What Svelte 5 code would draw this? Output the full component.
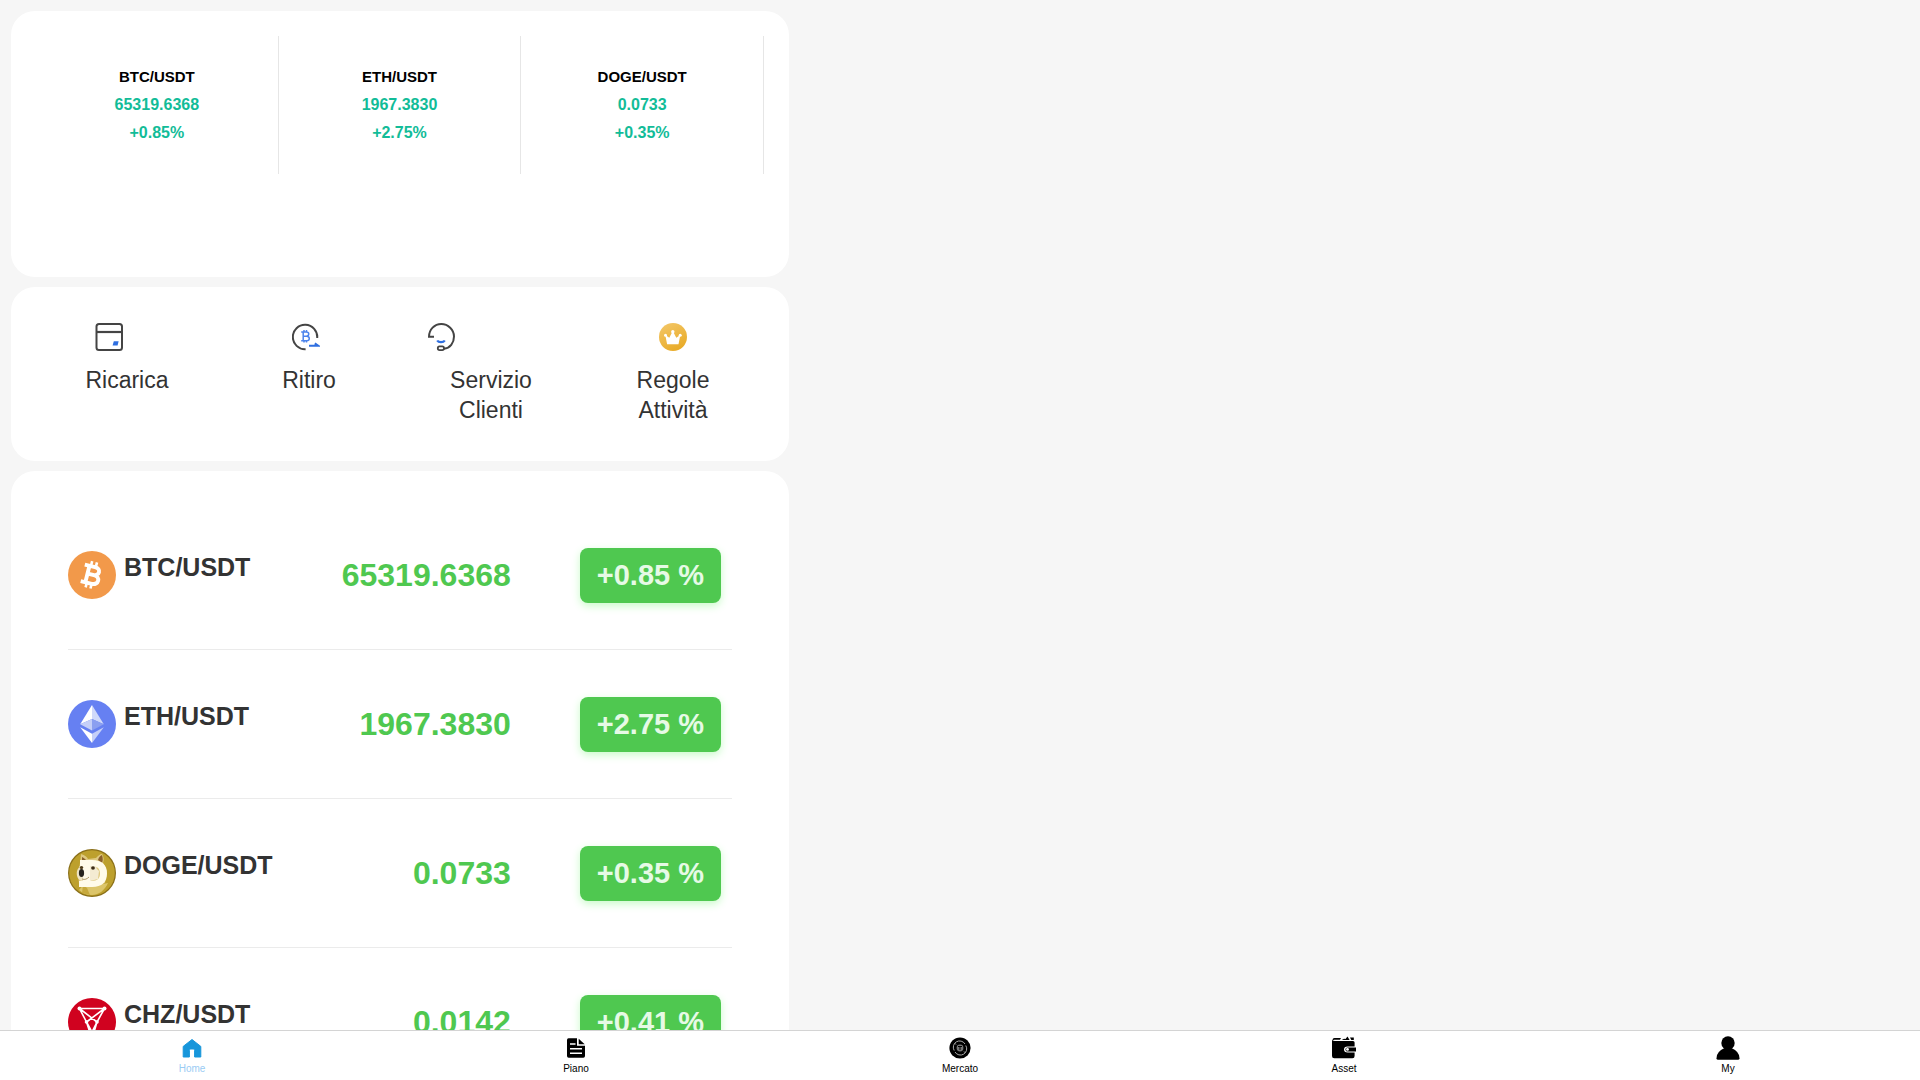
<script>
  const quotes = [
    { pair: 'BTC/USDT', price: '65319.6368', change: '+0.85', coin: 'btc' },
    { pair: 'ETH/USDT', price: '1967.3830', change: '+2.75', coin: 'eth' },
    { pair: 'DOGE/USDT', price: '0.0733', change: '+0.35', coin: 'doge' },
    { pair: 'CHZ/USDT', price: '0.0142', change: '+0.41', coin: 'chz' }
  ];
  const featured = quotes.slice(0, 3);
  const services = [
    { label: 'Ricarica', icon: 'card' },
    { label: 'Ritiro', icon: 'withdraw' },
    { label: 'Servizio Clienti', icon: 'support' },
    { label: 'Regole Attività', icon: 'crown' }
  ];
  const tabs = ['Home', 'Piano', 'Mercato', 'Asset', 'My'];
  let active = $state('Home');
</script>

<div class="app">
  <main>
    <section class="card ticker" aria-label="In evidenza">
      {#each featured as q}
        <a class="tick" href="#{q.coin}">
          <strong>{q.pair}</strong>
          <span>{q.price}</span>
          <span>{q.change}%</span>
        </a>
      {/each}
    </section>

    <section class="card services" aria-label="Servizi">
      {#each services as s}
        <button class="service" class:centered={s.icon === 'crown'}>
          <span class="inner">
            <svg class="sicon" viewBox="0 0 28 28" fill="none" aria-hidden="true">
              {#if s.icon === 'card'}
                <rect x="1.500" y="1" width="25.500" height="26" rx="2.500" stroke="#444" stroke-width="2" />
                <path d="M1.500 9h25.500" stroke="#444" stroke-width="2.200" />
                <path d="M18.800 18.200h4.800l-1 4.400h-5z" fill="#2f6fe0" />
              {:else if s.icon === 'withdraw'}
                <path d="M13.600 26.200A12.200 12.200 0 1 1 25.200 15" stroke="#444" stroke-width="2" />
                <path d="M9.200 9h5c3.400 0 3.400 4.200 0 4.200h-3.200h3.600c3.600 0 3.600 4.600 0 4.600H9.200M11.200 9v8.800M12 7v2M14.500 7v2M12 17.800v1.800M14.500 17.800v1.800" stroke="#4b83ec" stroke-width="1.500" />
                <path d="M17 22.800h9.400L22.800 20.400" stroke="#2f6fe0" stroke-width="2" />
              {:else if s.icon === 'support'}
                <path d="M6 13.800H1C1 6.500 6.500 1 13.300 1S26 6.700 26 13.500c0 6.500-4 11.800-10 12.300" stroke="#444" stroke-width="2" />
                <rect x="9.800" y="23.400" width="6.200" height="3.700" rx="1.800" stroke="#444" stroke-width="1.800" />
                <path d="M9.200 17.500c1.300 2.200 6.300 2.200 7.600 0" stroke="#2f6fe0" stroke-width="2.200" />
              {:else}
                <defs>
                  <linearGradient id="gold" x1="6" y1="2" x2="20" y2="28" gradientUnits="userSpaceOnUse">
                    <stop stop-color="#f2c462" />
                    <stop offset="1" stop-color="#e8aa25" />
                  </linearGradient>
                </defs>
                <circle cx="14" cy="14" r="14" fill="url(#gold)" />
                <g fill="#fff">
                  <path d="M6.300 12l4 2.700L13 9.500h1.600l2.700 5.200L21.300 12l-1.800 9.200H8.100z" />
                  <circle cx="6.500" cy="12.300" r="1.500" />
                  <circle cx="13.800" cy="8.700" r="1.700" />
                  <circle cx="21.200" cy="12.300" r="1.500" />
                </g>
              {/if}
            </svg>
            <span class="label">{s.label}</span>
          </span>
        </button>
      {/each}
    </section>

    <section class="card market" aria-label="Mercato">
      <ul>
        {#each quotes as q}
          <li>
            <svg class="coin" viewBox="0 0 48 48" aria-hidden="true">
              {#if q.coin === 'btc'}
                <circle cx="24" cy="24" r="24" fill="#f2994a" />
                <g transform="rotate(14 24 24)" fill="none" stroke="#fff">
                  <path d="M14.500 15.600h10.500c6.800 0 6.800 8 0 8H19.500h6.300c7.400 0 7.400 9 0 9H14.500M19.300 15.600v17" stroke-width="3.900" />
                  <path d="M20.800 10.500v5M25.800 10.500v5M20.800 32.500v5M25.800 32.500v5" stroke-width="2.600" />
                </g>
              {:else if q.coin === 'eth'}
                <circle cx="24" cy="24" r="24" fill="#6680f2" />
                <path d="M24 5L12.200 24.300 24 19z" fill="#fff" />
                <path d="M24 5l11.800 19.300L24 19z" fill="#d0d9fa" />
                <path d="M24 19l-11.800 5.300L24 30.500z" fill="#c5cff8" />
                <path d="M24 19l11.800 5.300L24 30.500z" fill="#8b9ff0" />
                <path d="M12.200 27.200L24 33.700V43z" fill="#fff" />
                <path d="M35.800 27.200L24 33.700V43z" fill="#c5cff8" />
              {:else if q.coin === 'doge'}
                <circle cx="24" cy="24" r="24" fill="#8a6f18" />
                <circle cx="24" cy="24" r="22.800" fill="#bda02d" />
                <path d="M11 41L18 33l17 2 5-1c-3 7-9 12-16 12-5 0-10-2-13-5z" fill="#dcc56a" />
                <path d="M15 36l-1 8 8 2-3-7z" fill="#c6a83c" />
                <path d="M12 14l1-9c4 1 6 3 7 5l8-1c2-2 4-4 6-4 2 3 2 6 1 9l4 8-2 12-13 4-13-4-1-8z" fill="#dfc980" />
                <path d="M14 8c2 1 3 2 4 3l-4 2zM34 6c1 3 1 6 0 8l-4-3c1-3 2-4 4-5z" fill="#8b602b" />
                <path d="M9 22c2-5 5-8 11-9l9 3-3 15-12 1c-4-1-6-5-5-10z" fill="#eee4c4" />
                <path fill-rule="evenodd" d="M12 11h12c10 0 15 5 15 13.500S34 38 24 38H11v-6h4V17h-3zm11 6v15c7 0 9-3 9-7.500S30 17 23 17z" fill="#fffbea" />
                <path d="M22 17h4l5 5-1 8-8 2z" fill="#f4ebd2" />
                <ellipse cx="13.500" cy="24" rx="2.600" ry="4" fill="#28251f" />
                <ellipse cx="13.500" cy="18.500" rx="1.700" ry="1.500" fill="#4e3c1d" />
                <ellipse cx="25" cy="19" rx="1.900" ry="1.700" fill="#3b2b17" />
                <path d="M14 30c3 1 5 0 7-2" stroke="#b09a68" fill="none" />
              {:else}
                <circle cx="24" cy="24" r="24" fill="#d0021f" />
                <g fill="none" stroke="#fff" stroke-width="1.600">
                  <path d="M11.500 10.500h25L29 24 24 41 18.500 24zM11.500 10.500L29 24M36.500 10.500L18.500 24M18.500 24L24 34l5-10" />
                </g>
                <g fill="#fff">
                  <circle cx="11.500" cy="10.500" r="2" />
                  <circle cx="36.500" cy="10.500" r="2" />
                  <circle cx="18.500" cy="24" r="1.800" />
                  <circle cx="29" cy="24" r="1.800" />
                </g>
              {/if}
            </svg>
            <span class="pair">{q.pair}</span>
            <span class="price">{q.price}</span>
            <span class="badge">{q.change} %</span>
          </li>
        {/each}
      </ul>
    </section>
  </main>

  <nav aria-label="Principale">
    {#each tabs as t}
      <a href="#{t}" class:active={active === t} onclick={() => (active = t)}>
        <svg viewBox="0 0 24 24" aria-hidden="true">
          {#if t === 'Home'}
            <path fill="#1796db" stroke="#1796db" stroke-width="1" stroke-linejoin="round" d="M12 3.500L3.200 10.400V21h6.200v-6.700q0-1.300 1.300-1.300h2.600q1.300 0 1.300 1.300V21h6.200V10.400z" />
          {:else if t === 'Piano'}
            <path d="M4.500 2.300H13v7.400h8V20q0 1.700-1.700 1.700H4.700Q3 21.700 3 20V4q0-1.700 1.500-1.700z" />
            <path d="M14.700 2.800l6 5.500h-6z" />
            <path d="M6 8h5.500M6 12.700h12M6 17.300h12" stroke="#fff" stroke-width="1.600" />
          {:else if t === 'Mercato'}
            <circle cx="12" cy="12" r="10.600" />
            <g fill="none" stroke="#aaa" stroke-width="1">
              <path d="M6.200 14.500A6.300 6.300 0 0 1 17 8M17.800 9.500A6.300 6.300 0 0 1 7 16M6.500 7l1.500 1.500M17.500 17L16 15.500" />
            </g>
            <circle cx="12" cy="12" r="3.400" fill="#777" />
            <path d="M10 10.500h4M12 10.500v3.500" stroke="#000" stroke-width="1" />
          {:else if t === 'Asset'}
            <path d="M.500 4Q.500 2.200 2.500 2H9L8 3.800H2L.800 4.500zM9.800 4L12 2.800 13.500 3l2-2.600L17.600 4zM18 1.500h3.800V4h-2.500z" />
            <path d="M0 4q1 1 3 1h18q1.600 0 1.600 1.600v3.800h-7q-3.600 0-3.600 3t3.600 3h7V20q0 2.200-2.200 2.200H2.300Q0 22.200 0 20z" />
            <path d="M24 11.400v4.200h-8q-2.600 0-2.600-2.200t2.600-2z" />
            <circle cx="15.500" cy="13.400" r="1.400" fill="#fff" />
          {:else}
            <circle cx="12" cy="7" r="6.700" />
            <path d="M8.500 12h7q8 3.500 8 10.200 0 1.600-1.600 1.600H2.100Q.500 23.800.500 22.200.500 15.500 8.500 12z" />
          {/if}
        </svg>
        <span>{t}</span>
      </a>
    {/each}
  </nav>
</div>

<style>
  :global(body) {
    background: #f6f6f6;
  }
  .app {
    display: flex;
    flex-direction: column;
    height: 100vh;
    color: #333;
    font-family: 'Liberation Sans', Arial, sans-serif;
  }
  a {
    color: inherit;
    text-decoration: none;
  }
  main {
    flex: 1;
    min-height: 0;
    overflow-y: auto;
    scrollbar-width: none;
    display: flex;
    flex-direction: column;
    gap: 10px;
    box-sizing: border-box;
    width: 100%;
    max-width: 800px;
    padding: 11px;
  }
  .card {
    flex: none;
    background: #fff;
    border-radius: 24px;
  }
  .ticker {
    display: grid;
    grid-template-columns: repeat(3, 1fr);
    padding: 25px 25px 103px;
  }
  .tick {
    display: flex;
    flex-direction: column;
    align-items: center;
    padding: 27px 0;
    border-right: 1px solid #e6e6e6;
    color: #12bc98;
    font-size: 16px;
    font-weight: 700;
    line-height: 28px;
  }
  .tick strong {
    color: #000;
    font-size: 15px;
  }
  .services {
    display: grid;
    grid-template-columns: repeat(4, 1fr);
    padding: 36px 25px;
  }
  .service {
    display: flex;
    flex-direction: column;
    align-items: center;
    padding: 0;
    border: 0;
    background: none;
    color: inherit;
    font: inherit;
    cursor: pointer;
  }
  .inner {
    display: flex;
    flex-direction: column;
    gap: 14px;
    max-width: 80%;
  }
  .sicon {
    width: 28px;
    height: 28px;
    margin-left: 10px;
  }
  .centered .sicon {
    margin: 0 auto;
  }
  .label {
    font-size: 23px;
    line-height: 30px;
  }
  .market {
    padding: 30px 57px;
  }
  ul {
    margin: 0;
    padding: 0;
    list-style: none;
  }
  li {
    display: flex;
    align-items: center;
    height: 148px;
    padding-right: 11px;
    border-bottom: 1px solid #ebebeb;
    font-weight: 700;
  }
  .coin {
    width: 48px;
    height: 48px;
    margin-right: 8px;
  }
  .pair {
    height: 48px;
    font-size: 25px;
    line-height: 32px;
  }
  .price {
    flex: 1;
    color: #4fc850;
    font-size: 32px;
    text-align: right;
  }
  .badge {
    margin-left: 69px;
    padding: 0 17px;
    border-radius: 8px;
    background: #4fc850;
    box-shadow: 0 3px 8px #c9fbc9;
    color: #e6fae6;
    font-size: 29px;
    line-height: 55px;
  }
  nav {
    display: grid;
    grid-template-columns: repeat(5, 1fr);
    border-top: 1px solid #d4d4d4;
    background: #fff;
  }
  nav a {
    display: flex;
    flex-direction: column;
    align-items: center;
    gap: 3px;
    padding: 5px 0;
    color: #000;
    font-size: 10px;
    line-height: 12px;
  }
  nav a.active {
    color: #9accf4;
  }
  nav svg {
    width: 24px;
    height: 24px;
  }
</style>
